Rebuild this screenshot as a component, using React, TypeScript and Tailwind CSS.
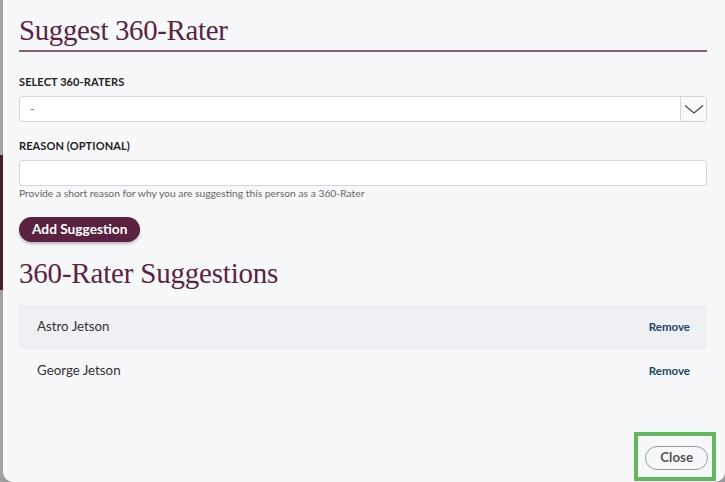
const suggestions = ["Astro Jetson", "George Jetson"];

const App = () => {
  return (
    <div className="flex w-[725px] h-[482px] bg-[#9c9c9e] font-['Lato',_sans-serif] overflow-hidden">
      {/* backdrop strip */}
      <div className="flex flex-col w-[3px] shrink-0">
        <div className="h-[155px] bg-[#a3a3a5]" />
        <div className="h-[135px] bg-[#4b1d31]" />
        <div className="flex-1 bg-[#a3a3a5]" />
      </div>

      <div className="relative flex-1 flex flex-col bg-[#f7f8fa] rounded-bl-[10px] rounded-br-[10px] pl-[16px] pr-[18px]">
        <h1 className="mt-[14px] pb-[4px] border-b-2 border-[#8c5d77] text-[28.8px] leading-[32px] text-[#5b2442] tracking-[-0.3px] font-['Liberation_Serif',_serif]">
          Suggest 360-Rater
        </h1>

        <label className="mt-[23px] text-[11px] leading-[14px] font-bold text-[#222] tracking-[0.1px]">SELECT 360-RATERS</label>
        <div className="mt-[7px] flex h-[26px] bg-white border border-[#d5d6d8] rounded-[3px]">
          <div className="flex-1 flex items-center pl-[10px] text-[12px] text-[#777]">-</div>
          <div className="w-[26px] flex items-center justify-center border-l border-[#d5d6d8] bg-[#f9f9f9]">
            <svg width="20" height="10" viewBox="0 0 20 10" fill="none">
              <polyline points="1,1.5 10,9 19,1.5" stroke="#444" strokeWidth="1.1" />
            </svg>
          </div>
        </div>

        <label className="mt-[17px] text-[11px] leading-[14px] font-bold text-[#222] tracking-[0.1px]">REASON (OPTIONAL)</label>
        <div className="mt-[7px] h-[26px] bg-white border border-[#d5d6d8] rounded-[3px]" />
        <p className="mt-[1px] text-[10.3px] leading-[12px] text-[#666]">
          Provide a short reason for why you are suggesting this person as a 360-Rater
        </p>

        <div className="mt-[17px]">
          <button className="h-[25px] px-[13px] rounded-full bg-[#5a2240] text-white text-[13.7px] font-bold shadow-[0_2px_3px_rgba(0,0,0,0.25)]">
            Add Suggestion
          </button>
        </div>

        <h2 className="mt-[15px] text-[29px] leading-[32px] text-[#5b2442] tracking-[-0.2px] font-['Liberation_Serif',_serif]">
          360-Rater Suggestions
        </h2>

        <div className="mt-[16px] flex flex-col">
          {suggestions.map((name, i) => (
            <div
              key={name}
              className={`flex items-center justify-between h-[44px] pl-[18px] pr-[17px] ${i === 0 ? "bg-[#eff0f3]" : ""}`}
            >
              <span className="text-[13.3px] text-[#333]">{name}</span>
              <button className="text-[11.5px] font-bold text-[#1e4667]">Remove</button>
            </div>
          ))}
        </div>

        <div className="mt-auto mb-[1px] flex justify-end -mr-[9px]">
          <div className="border-[4px] border-[#62b85c] pl-[7px] pr-[4px] pt-[8px] pb-[7px]">
            <button className="h-[24px] px-[14px] rounded-full border border-[#9a9a9a] bg-[#f7f8fa] text-[13.3px] font-bold text-[#555]">
              Close
            </button>
          </div>
        </div>
      </div>
    </div>
  );
};

export default App;
